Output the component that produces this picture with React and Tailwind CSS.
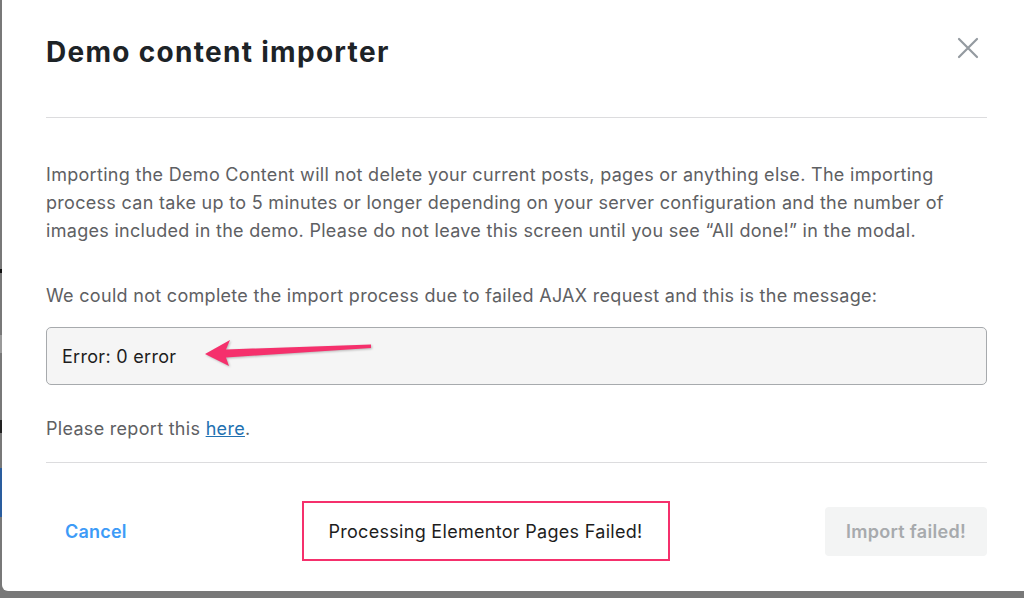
import React from "react";

export default function App() {
  return (
    <div className="w-[1024px] h-[598px] bg-[#787878] flex overflow-hidden" style={{ fontFamily: "Inter, 'Noto Sans', sans-serif" }}>
      <div className="w-[2px] h-[591px] flex flex-col shrink-0">
        <div className="h-[269px]" />
        <div className="h-[4px] bg-[#111]" />
        <div className="h-[62px]" />
        <div className="h-[18px] bg-[#9a9a9a]" />
        <div className="h-[67px]" />
        <div className="h-[13px] bg-[#222]" />
        <div className="h-[35px]" />
        <div className="h-[49px] bg-[#2a5d9e]" />
      </div>
      <div className="flex-1 h-[591px] bg-white rounded-bl-[6px] pl-[44px] pr-[37px] flex flex-col">
        <div className="h-[117px] flex justify-between items-start pt-[33px]">
          <h1 className="text-[28px] leading-[38px] font-bold text-[#1d2327] tracking-[1.3px]">Demo content importer</h1>
          <svg className="mt-[2px] mr-[6px]" width="26" height="26" viewBox="0 0 26 26">
            <path d="M4 4 L22 22 M22 4 L4 22" stroke="#949aa0" strokeWidth="2.2" strokeLinecap="round" />
          </svg>
        </div>
        <div className="border-t border-[#dcdcde]" />
        <p className="mt-[43px] text-[18px] leading-[28px] tracking-[0.3px] text-[#5e6063]">
          Importing the Demo Content will not delete your current posts, pages or anything else. The importing process can take up to 5 minutes or longer depending on your server configuration and the number of images included in the demo. Please do not leave this screen until you see “All done!” in the modal.
        </p>
        <p className="mt-[37px] text-[18px] leading-[28px] tracking-[0.3px] text-[#5e6063]">
          We could not complete the import process due to failed AJAX request and this is the message:
        </p>
        <div className="relative mt-[17px] h-[58px] rounded-[5px] border border-[#a7aaad] bg-[#f5f5f5] flex items-center pl-[15px]">
          <span className="text-[18px] tracking-[0.3px] text-[#1d1d1d]">Error: 0 error</span>
          <svg className="absolute left-[150px] top-[6px]" width="180" height="40" viewBox="150 6 180 40" style={{ filter: "drop-shadow(1px 1px 1px rgba(0,0,0,0.25))" }}>
            <polygon points="158,26 183,12 179,21.5 324,16.5 324,20 179,29.5 182,38" fill="#f5306c" />
          </svg>
        </div>
        <p className="mt-[30px] text-[18px] leading-[28px] tracking-[0.3px] text-[#5e6063]">
          Please report this <a className="text-[#2271b1] underline">here</a>.
        </p>
        <div className="mt-[19px] border-t border-[#dcdcde]" />
        <div className="flex-1 flex items-center justify-between pt-[8px]">
          <button className="w-[100px] text-left pl-[19px] text-[18px] font-semibold tracking-[0.2px] text-[#3d9bf7]">Cancel</button>
          <div className="w-[368px] h-[60px] border-2 border-[#f5306c] flex items-center justify-center text-[18px] tracking-[0.3px] text-[#1d1d1d]">
            Processing Elementor Pages Failed!
          </div>
          <button className="w-[162px] h-[49px] rounded-[4px] bg-[#f3f4f4] text-[18px] font-semibold tracking-[0.3px] text-[#a7aaad]">Import failed!</button>
        </div>
      </div>
    </div>
  );
}
